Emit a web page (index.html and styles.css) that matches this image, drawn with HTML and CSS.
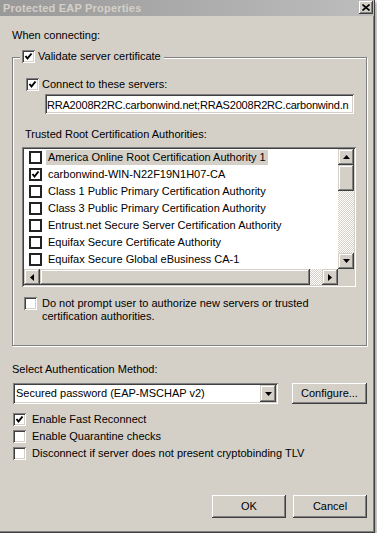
FILE: index.html
```html
<!DOCTYPE html>
<html lang="en">
<head>
    <meta charset="UTF-8">
    <meta name="viewport" content="width=device-width, initial-scale=1.0">
    <title>Protected EAP Properties</title>
    <link rel="stylesheet" href="styles.css">
</head>
<body>
    <div class="window">
        <div class="titlebar">
            <span class="title">Protected EAP Properties</span>
            <span class="close-btn">
                <svg width="8" height="7" viewBox="0 0 8 7"><path d="M0.5 0.5 L7.5 6.5 M7.5 0.5 L0.5 6.5" stroke="#000" stroke-width="1.6"/></svg>
            </span>
        </div>

        <div class="content">
            <div class="label first">When connecting:</div>

            <div class="group">
                <div class="group-title">
                    <span class="check"><svg viewBox="0 0 13 13"><polyline points="3.5,6 5.5,8.5 9.5,3.5" fill="none" stroke="#000" stroke-width="2"/></svg></span>
                    <span>Validate server certificate</span>
                </div>

                <div class="check-row connect">
                    <span class="check"><svg viewBox="0 0 13 13"><polyline points="3.5,6 5.5,8.5 9.5,3.5" fill="none" stroke="#000" stroke-width="2"/></svg></span>
                    <span>Connect to these servers:</span>
                </div>

                <div class="textbox">RRA2008R2RC.carbonwind.net;RRAS2008R2RC.carbonwind.n</div>

                <div class="label trusted">Trusted Root Certification Authorities:</div>

                <!-- certificate list with scrollbars -->
                <div class="listbox">
                    <div class="list-main">
                        <div class="list-rows">
                            <div class="list-row"><span class="list-check"></span><span class="list-text selected">America Online Root Certification Authority 1</span></div>
                            <div class="list-row"><span class="list-check"><svg viewBox="0 0 9 9"><polyline points="1.5,4 3.5,6.5 7.5,1.5" fill="none" stroke="#000" stroke-width="2"/></svg></span><span class="list-text">carbonwind-WIN-N22F19N1H07-CA</span></div>
                            <div class="list-row"><span class="list-check"></span><span class="list-text">Class 1 Public Primary Certification Authority</span></div>
                            <div class="list-row"><span class="list-check"></span><span class="list-text">Class 3 Public Primary Certification Authority</span></div>
                            <div class="list-row"><span class="list-check"></span><span class="list-text">Entrust.net Secure Server Certification Authority</span></div>
                            <div class="list-row"><span class="list-check"></span><span class="list-text">Equifax Secure Certificate Authority</span></div>
                            <div class="list-row"><span class="list-check"></span><span class="list-text">Equifax Secure Global eBusiness CA-1</span></div>
                        </div>
                        <div class="vscroll">
                            <span class="scroll-btn"><svg width="7" height="4" viewBox="0 0 7 4"><path d="M3.5 0 L7 4 L0 4 Z"/></svg></span>
                            <span class="vthumb"></span>
                            <span class="track"></span>
                            <span class="scroll-btn"><svg width="7" height="4" viewBox="0 0 7 4"><path d="M0 0 L7 0 L3.5 4 Z"/></svg></span>
                        </div>
                    </div>
                    <div class="hscroll">
                        <span class="scroll-btn"><svg width="4" height="7" viewBox="0 0 4 7"><path d="M4 0 L4 7 L0 3.5 Z"/></svg></span>
                        <span class="hthumb"></span>
                        <span class="track"></span>
                        <span class="scroll-btn"><svg width="4" height="7" viewBox="0 0 4 7"><path d="M0 0 L4 3.5 L0 7 Z"/></svg></span>
                        <span class="corner"></span>
                    </div>
                </div>

                <div class="check-row prompt">
                    <span class="check"></span>
                    <span>Do not prompt user to authorize new servers or trusted<br>certification authorities.</span>
                </div>
            </div>

            <div class="label method">Select Authentication Method:</div>
            <div class="method-row">
                <div class="combo">
                    <span class="combo-text">Secured password (EAP-MSCHAP v2)</span>
                    <span class="combo-btn"><svg width="7" height="4" viewBox="0 0 7 4"><path d="M0 0 L7 0 L3.5 4 Z"/></svg></span>
                </div>
                <button class="btn configure">Configure...</button>
            </div>

            <div class="options">
                <div class="check-row">
                    <span class="check"><svg viewBox="0 0 13 13"><polyline points="3.5,6 5.5,8.5 9.5,3.5" fill="none" stroke="#000" stroke-width="2"/></svg></span>
                    <span>Enable Fast Reconnect</span>
                </div>
                <div class="check-row">
                    <span class="check"></span>
                    <span>Enable Quarantine checks</span>
                </div>
                <div class="check-row">
                    <span class="check"></span>
                    <span>Disconnect if server does not present cryptobinding TLV</span>
                </div>
            </div>

            <div class="footer">
                <button class="btn">OK</button>
                <button class="btn">Cancel</button>
            </div>
        </div>
    </div>
</body>
</html>
```

FILE: styles.css
```css
body {
    margin: 0;
    background: #fff;
    font-family: "Liberation Sans", Arial, sans-serif;
    font-size: 11px;
    line-height: 13px;
    color: #000;
}
.window {
    width: 374px;
    height: 532px;
    background: #d4d0c8;
    border-right: 1px solid #404040;
    border-bottom: 1px solid #404040;
    box-shadow: inset -1px -1px 0 #808080, 2px 2px 3px rgba(0, 0, 0, 0.35);
    display: flex;
    flex-direction: column;
}
.titlebar {
    height: 16px;
    flex: none;
    display: flex;
    align-items: center;
    padding: 0 1px 0 3px;
    background: linear-gradient(to right, #999999, #bdbdbd);
}
.title {
    font-weight: bold;
    letter-spacing: 0.2px;
    color: #d4d0c8;
}
.close-btn {
    margin-left: auto;
    width: 14px;
    height: 13px;
    margin-top: 1px;
    align-self: flex-start;
    display: flex;
    align-items: center;
    justify-content: center;
    background: #d4d0c8;
    box-shadow: inset -1px -1px #404040, inset 1px 1px #fff, inset -2px -2px #808080;
}
.content {
    flex: 1;
    display: flex;
    flex-direction: column;
    padding: 0 7px 14px 12px;
}
.label.first {
    margin-top: 13px;
}

/* etched group box */
.group {
    margin-top: 15px;
    border: 1px solid #808080;
    box-shadow: inset 1px 1px 0 #fff, 1px 1px 0 #fff;
    padding: 0 11px 22px 9px;
    display: flex;
    flex-direction: column;
    align-items: flex-start;
}
.group-title {
    display: flex;
    align-items: center;
    gap: 3px;
    margin: -8px 0 0 -2px;
    padding: 0 3px 0 2px;
    background: #d4d0c8;
}
.check-row {
    display: flex;
    align-items: center;
    gap: 4px;
    white-space: nowrap;
}
.check {
    width: 13px;
    height: 13px;
    flex: none;
    background: #fff;
    box-shadow: inset 1px 1px #808080, inset -1px -1px #fff, inset 2px 2px #404040, inset -2px -2px #d4d0c8;
}
.check svg {
    display: block;
    width: 13px;
    height: 13px;
}
.connect {
    margin: 15px 0 0 4px;
    gap: 3px;
}
.textbox {
    margin: 3px 0 0 23px;
    width: 305px;
    height: 18px;
    padding: 2px 2px 0 2px;
    line-height: 18px;
    letter-spacing: -0.2px;
    background: #fff;
    white-space: nowrap;
    overflow: hidden;
    box-shadow: inset 1px 1px #808080, inset -1px -1px #fff, inset 2px 2px #404040, inset -2px -2px #d4d0c8;
}
.trusted {
    margin: 14px 0 0 3px;
}

/* list box */
.listbox {
    margin-top: 6px;
    width: 330px;
    padding: 2px;
    background: #fff;
    box-shadow: inset 1px 1px #808080, inset -1px -1px #fff, inset 2px 2px #404040, inset -2px -2px #d4d0c8;
}
.list-main {
    display: flex;
    height: 120px;
}
.list-rows {
    flex: 1;
    padding-left: 5px;
    overflow: hidden;
}
.list-row {
    height: 17px;
    display: flex;
    align-items: center;
    white-space: nowrap;
}
.list-check {
    width: 13px;
    height: 13px;
    box-sizing: border-box;
    border: 2px solid #222;
    background: #fff;
    flex: none;
    margin-right: 4px;
}
.list-check svg {
    display: block;
    width: 9px;
    height: 9px;
}
.list-text {
    padding: 1px 2px;
}
.list-text.selected {
    background: #d4d0c8;
}
.vscroll {
    width: 16px;
    display: flex;
    flex-direction: column;
}
.hscroll {
    height: 16px;
    display: flex;
}
.scroll-btn {
    width: 16px;
    height: 16px;
    flex: none;
    display: flex;
    align-items: center;
    justify-content: center;
    background: #d4d0c8;
    box-shadow: inset -1px -1px #404040, inset 1px 1px #d4d0c8, inset -2px -2px #808080, inset 2px 2px #fff;
}
.vthumb, .hthumb {
    flex: none;
    background: #d4d0c8;
    box-shadow: inset -1px -1px #404040, inset 1px 1px #d4d0c8, inset -2px -2px #808080, inset 2px 2px #fff;
}
.vthumb {
    height: 26px;
}
.hthumb {
    width: 270px;
}
.track {
    flex: 1;
    background: repeating-conic-gradient(#fff 0 25%, #d4d0c8 0 50%) 0 0 / 2px 2px;
}
.corner {
    width: 16px;
    flex: none;
    background: #d4d0c8;
}

.prompt {
    margin: 10px 0 0 2px;
    align-items: flex-start;
    gap: 5px;
}

.method {
    margin-top: 17px;
}
.method-row {
    margin-top: 7px;
    display: flex;
    align-items: flex-start;
}
.combo {
    margin-left: 1px;
    width: 261px;
    height: 17px;
    padding: 2px;
    display: flex;
    align-items: center;
    background: #fff;
    box-shadow: inset 1px 1px #808080, inset -1px -1px #fff, inset 2px 2px #404040, inset -2px -2px #d4d0c8;
}
.combo-text {
    flex: 1;
    padding-left: 1px;
    white-space: nowrap;
}
.combo-btn {
    width: 16px;
    height: 17px;
    display: flex;
    align-items: center;
    justify-content: center;
    background: #d4d0c8;
    box-shadow: inset -1px -1px #404040, inset 1px 1px #d4d0c8, inset -2px -2px #808080, inset 2px 2px #fff;
}
.btn {
    font: inherit;
    color: #000;
    width: 74px;
    height: 23px;
    padding: 0;
    border: none;
    background: #d4d0c8;
    box-shadow: inset -1px -1px #404040, inset 1px 1px #fff, inset -2px -2px #808080, inset 2px 2px #d4d0c8;
}
.btn.configure {
    margin-left: auto;
    width: 75px;
    height: 21px;
}

.options {
    margin-top: 9px;
    display: flex;
    flex-direction: column;
    gap: 4px;
}
.options .check-row {
    margin-left: 1px;
    gap: 6px;
}

.footer {
    margin-top: auto;
    display: flex;
    justify-content: flex-end;
    gap: 7px;
}
```
